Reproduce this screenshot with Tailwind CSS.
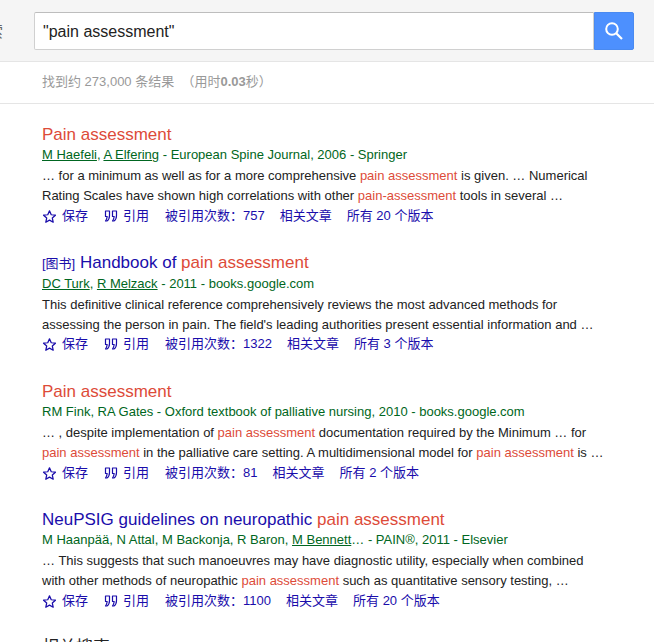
<!DOCTYPE html>
<html lang="zh">
<head>
<meta charset="utf-8">
<script src="https://cdn.jsdelivr.net/npm/@tailwindcss/browser@4"></script>
</head>
<body class="h-[642px] overflow-hidden bg-white font-['Liberation_Sans','Noto_Sans_CJK_SC',sans-serif] text-[13px] leading-[20px] text-[#222]">
<header class="relative h-[62px] bg-[#f5f5f5] border-b border-[#e5e5e5] pl-[34px] pt-[12px]">
  <span class="absolute left-[-13px] top-[22px] text-[16px] leading-[20px] text-[#666]">索</span>
  <div class="flex h-[38px] w-[600px]">
    <div class="flex-1 bg-white border border-[#d0d0d0] border-t-[#bdbdbd] rounded-l-[2px] pl-[8px] pt-[1px] text-[16px] leading-[36px] text-[#222]">"pain assessment"</div>
    <div class="w-[40px] bg-[#4d90fe] border border-[#4a8af0] rounded-r-[2px] flex items-center justify-center">
      <svg width="20" height="20" viewBox="0 0 20 20" fill="none" stroke="#fff" stroke-width="2"><circle cx="8" cy="8" r="5.8"/><path d="M12.2 12.2 18 18" stroke-width="2.2"/></svg>
    </div>
  </div>
</header>
<div class="h-[42px] border-b border-[#e5e5e5] pl-[42px] leading-[40px] text-[#999]">找到约 273,000 条结果 &nbsp;（用时<b>0.03</b>秒）</div>

<main class="pl-[42px] pt-[20px] flex flex-col gap-[26px]">
  <article class="w-[580px]">
    <h3 class="text-[17px] leading-[21px] font-normal text-[#dd4b39]">Pain assessment</h3>
    <div class="text-[#006621]"><u>M Haefeli</u>, <u>A Elfering</u> - European Spine Journal, 2006 - Springer</div>
    <p class="mt-[1px] text-[#222]">… for a minimum as well as for a more comprehensive <span class="text-[#dd4b39]">pain assessment</span> is given. … Numerical<br>Rating Scales have shown high correlations with other <span class="text-[#dd4b39]">pain-assessment</span> tools in several …</p>
    <div class="flex items-center text-[#1a0dab]">
      <svg class="mr-[5px]" width="15" height="15" viewBox="0 0 24 24" fill="none" stroke="#1a0dab" stroke-width="2" stroke-linejoin="round"><path d="M12 3l2.8 6.2 6.7.7-5 4.6 1.4 6.7L12 17.8 6.100 21.200l1.400-6.700-5-4.600 6.700-.7z"/></svg>
      <span>保存</span>
      <svg class="ml-[16px] mr-[5px]" width="14" height="12" viewBox="0 0 14 12" fill="none" stroke="#1a0dab" stroke-width="1.200" stroke-linejoin="round"><path d="M1.500 1h4v4.500C5.500 8 4.500 10 3 11H1.500C2.500 9.500 3 8.500 3.200 6.500H1.500zM8.500 1h4v4.500C12.500 8 11.500 10 10 11H8.500C9.500 9.500 10 8.500 10.200 6.500H8.500z"/></svg>
      <span>引用</span>
      <span class="ml-[16px]">被引用次数：757</span>
      <span class="ml-[15px]">相关文章</span>
      <span class="ml-[15px]">所有 20 个版本</span>
    </div>
  </article>

  <article class="w-[580px]">
    <h3 class="text-[17px] leading-[21px] font-normal text-[#1a0dab]"><span class="text-[13px]">[图书]</span> Handbook of <span class="text-[#dd4b39]">pain assessment</span></h3>
    <div class="text-[#006621]"><u>DC Turk</u>, <u>R Melzack</u> - 2011 - books.google.com</div>
    <p class="mt-[1px] text-[#222]">This definitive clinical reference comprehensively reviews the most advanced methods for<br>assessing the person in pain. The field's leading authorities present essential information and …</p>
    <div class="flex items-center text-[#1a0dab] -mt-[1px]">
      <svg class="mr-[5px]" width="15" height="15" viewBox="0 0 24 24" fill="none" stroke="#1a0dab" stroke-width="2" stroke-linejoin="round"><path d="M12 3l2.8 6.2 6.7.7-5 4.6 1.4 6.7L12 17.8 6.100 21.200l1.400-6.700-5-4.600 6.700-.7z"/></svg>
      <span>保存</span>
      <svg class="ml-[16px] mr-[5px]" width="14" height="12" viewBox="0 0 14 12" fill="none" stroke="#1a0dab" stroke-width="1.200" stroke-linejoin="round"><path d="M1.500 1h4v4.500C5.500 8 4.500 10 3 11H1.500C2.500 9.500 3 8.500 3.200 6.500H1.500zM8.500 1h4v4.500C12.500 8 11.500 10 10 11H8.500C9.500 9.500 10 8.500 10.200 6.500H8.500z"/></svg>
      <span>引用</span>
      <span class="ml-[16px]">被引用次数：1322</span>
      <span class="ml-[15px]">相关文章</span>
      <span class="ml-[15px]">所有 3 个版本</span>
    </div>
  </article>

  <article class="w-[580px] mt-[1px]">
    <h3 class="text-[17px] leading-[21px] font-normal text-[#dd4b39]">Pain assessment</h3>
    <div class="text-[#006621]">RM Fink, RA Gates - Oxford textbook of palliative nursing, 2010 - books.google.com</div>
    <p class="mt-[1px] text-[#222]">… , despite implementation of <span class="text-[#dd4b39]">pain assessment</span> documentation required by the Minimum … for<br><span class="text-[#dd4b39]">pain assessment</span> in the palliative care setting. A multidimensional model for <span class="text-[#dd4b39]">pain assessment</span> is …</p>
    <div class="flex items-center text-[#1a0dab]">
      <svg class="mr-[5px]" width="15" height="15" viewBox="0 0 24 24" fill="none" stroke="#1a0dab" stroke-width="2" stroke-linejoin="round"><path d="M12 3l2.8 6.2 6.7.7-5 4.6 1.4 6.7L12 17.8 6.100 21.200l1.400-6.700-5-4.600 6.700-.7z"/></svg>
      <span>保存</span>
      <svg class="ml-[16px] mr-[5px]" width="14" height="12" viewBox="0 0 14 12" fill="none" stroke="#1a0dab" stroke-width="1.200" stroke-linejoin="round"><path d="M1.500 1h4v4.500C5.500 8 4.500 10 3 11H1.500C2.500 9.500 3 8.500 3.200 6.500H1.500zM8.500 1h4v4.500C12.500 8 11.500 10 10 11H8.500C9.500 9.500 10 8.500 10.200 6.500H8.500z"/></svg>
      <span>引用</span>
      <span class="ml-[16px]">被引用次数：81</span>
      <span class="ml-[15px]">相关文章</span>
      <span class="ml-[15px]">所有 2 个版本</span>
    </div>
  </article>

  <article class="w-[580px]">
    <h3 class="text-[17px] leading-[21px] font-normal text-[#1a0dab]">NeuPSIG guidelines on neuropathic <span class="text-[#dd4b39]">pain assessment</span></h3>
    <div class="text-[#006621]">M Haanpää, N Attal, M Backonja, R Baron, <u>M Bennett</u>… - PAIN®, 2011 - Elsevier</div>
    <p class="mt-[1px] text-[#222]">… This suggests that such manoeuvres may have diagnostic utility, especially when combined<br>with other methods of neuropathic <span class="text-[#dd4b39]">pain assessment</span> such as quantitative sensory testing, …</p>
    <div class="flex items-center text-[#1a0dab]">
      <svg class="mr-[5px]" width="15" height="15" viewBox="0 0 24 24" fill="none" stroke="#1a0dab" stroke-width="2" stroke-linejoin="round"><path d="M12 3l2.8 6.2 6.7.7-5 4.6 1.4 6.7L12 17.8 6.100 21.200l1.400-6.700-5-4.600 6.700-.7z"/></svg>
      <span>保存</span>
      <svg class="ml-[16px] mr-[5px]" width="14" height="12" viewBox="0 0 14 12" fill="none" stroke="#1a0dab" stroke-width="1.200" stroke-linejoin="round"><path d="M1.500 1h4v4.500C5.500 8 4.500 10 3 11H1.500C2.500 9.500 3 8.500 3.200 6.500H1.500zM8.500 1h4v4.500C12.500 8 11.500 10 10 11H8.500C9.500 9.500 10 8.500 10.200 6.500H8.500z"/></svg>
      <span>引用</span>
      <span class="ml-[16px]">被引用次数：1100</span>
      <span class="ml-[15px]">相关文章</span>
      <span class="ml-[15px]">所有 20 个版本</span>
    </div>
  </article>

  <h3 class="text-[17px] leading-[21px] font-normal text-[#222]">相关搜索</h3>
</main>
</body>
</html>
